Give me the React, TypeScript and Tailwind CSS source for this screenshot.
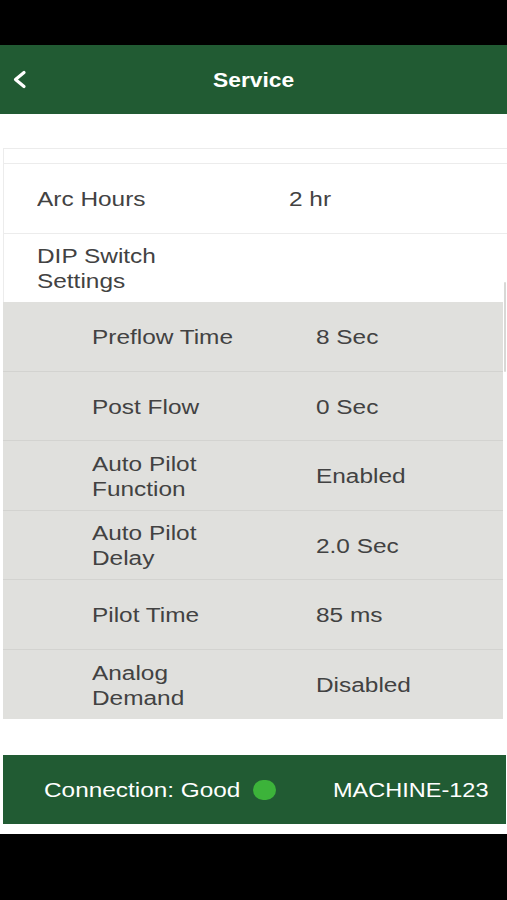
import React from "react";

const grayRows: { label: string[]; value: string }[] = [
  { label: ["Preflow Time"], value: "8 Sec" },
  { label: ["Post Flow"], value: "0 Sec" },
  { label: ["Auto Pilot", "Function"], value: "Enabled" },
  { label: ["Auto Pilot", "Delay"], value: "2.0 Sec" },
  { label: ["Pilot Time"], value: "85 ms" },
  { label: ["Analog", "Demand"], value: "Disabled" },
];

function T({ children }: { children: React.ReactNode }) {
  return <span className="inline-block whitespace-nowrap origin-left scale-x-[1.22]">{children}</span>;
}

export default function App() {
  return (
    <div className="w-[507px] h-[900px] bg-black flex flex-col font-['Liberation_Sans',Arial,sans-serif] text-[#424242]">
      <div className="h-[45px] shrink-0" />
      <header className="h-[69px] shrink-0 bg-[#215b33] grid grid-cols-[1fr_auto_1fr] items-center">
        <div className="pl-[11px] flex items-center">
          <svg width="17" height="19" viewBox="0 0 17 19" fill="none">
            <polyline points="13,2.5 4.5,9.5 13,16.5" stroke="white" strokeWidth="3.2" strokeLinecap="round" strokeLinejoin="round" />
          </svg>
        </div>
        <div className="text-white font-bold text-[20px] pt-[1px] scale-x-[1.14]">Service</div>
        <div />
      </header>
      <main className="h-[720px] shrink-0 bg-white flex flex-col">
        <div className="mt-[34px] h-[16px] ml-[3px] border-y border-l border-[#ececec]" />
        <div className="h-[70px] ml-[3px] border-b border-l border-[#ececec] flex items-center text-[20px]">
          <div className="w-[285px] pl-[33px]"><T>Arc Hours</T></div>
          <div><T>2 hr</T></div>
        </div>
        <div className="h-[68px] ml-[3px] border-l border-[#ececec] flex items-center text-[20px] leading-[25px]">
          <div className="pl-[33px] pt-[1px]">
            <div><T>DIP Switch</T></div>
            <div><T>Settings</T></div>
          </div>
        </div>
        <div className="relative ml-[3px] mr-[4px] bg-[#e0e0dd] flex flex-col">
          {grayRows.map((r, i) => (
            <div
              key={i}
              className={`h-[69.5px] pt-[3px] flex items-center text-[20px] leading-[25px] ${i < grayRows.length - 1 ? "border-b border-[#d3d3d0]" : ""}`}
            >
              <div className="w-[313px] pl-[89px]">
                {r.label.map((l, j) => (
                  <div key={j}><T>{l}</T></div>
                ))}
              </div>
              <div><T>{r.value}</T></div>
            </div>
          ))}
          <div className="absolute right-[-3px] top-[-20px] w-[2px] h-[90px] bg-[#d8d8d6] rounded-full" />
        </div>
        <div className="h-[36px]" />
        <footer className="h-[69px] ml-[3px] mr-[1px] bg-[#215b33] flex items-center text-white text-[21px]">
          <div className="w-[250px] pl-[41px]">
            <span className="inline-block whitespace-nowrap origin-left scale-x-[1.16]">Connection: Good</span>
          </div>
          <div className="w-[23px] h-[20px] rounded-full bg-[#3cb33a]" />
          <div className="ml-[57px]">
            <span className="inline-block whitespace-nowrap origin-left scale-x-[1.12]">MACHINE-123</span>
          </div>
        </footer>
      </main>
    </div>
  );
}
